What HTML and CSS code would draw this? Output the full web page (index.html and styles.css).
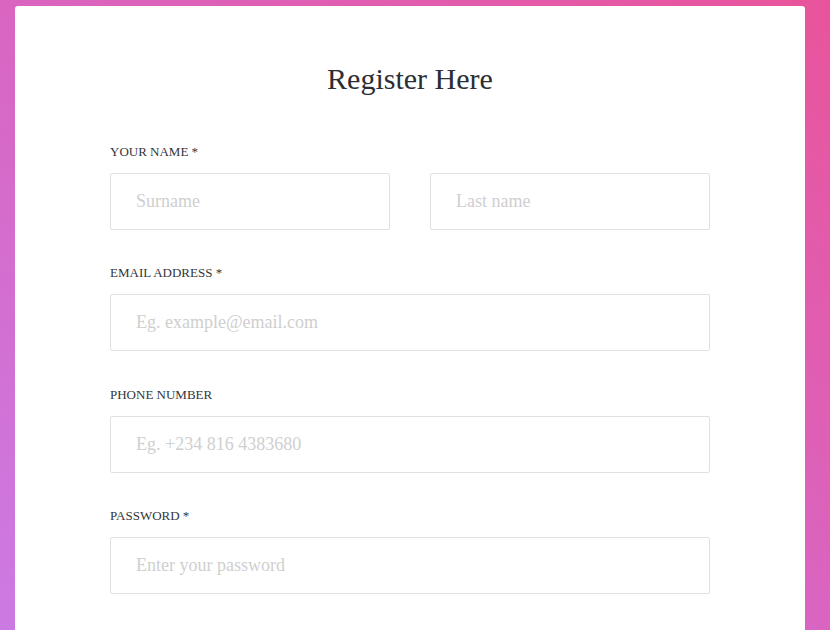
FILE: index.html
```html
<!DOCTYPE html>
<html lang="en">
<head>
<meta charset="utf-8">
<title>Register Here</title>
<link rel="stylesheet" href="styles.css">
</head>
<body>
<div class="page">
  <div class="card">
    <h1 class="title">Register Here</h1>
    <form class="form">
      <div class="group">
        <label class="label">YOUR NAME *</label>
        <div class="row">
          <input class="field" type="text" placeholder="Surname">
          <input class="field" type="text" placeholder="Last name">
        </div>
      </div>
      <div class="group">
        <label class="label">EMAIL ADDRESS *</label>
        <input class="field" type="email" placeholder="Eg. example@email.com">
      </div>
      <div class="group">
        <label class="label">PHONE NUMBER</label>
        <input class="field" type="tel" placeholder="Eg. +234 816 4383680">
      </div>
      <div class="group">
        <label class="label">PASSWORD *</label>
        <input class="field" type="password" placeholder="Enter your password">
      </div>
    </form>
  </div>
</div>
</body>
</html>
```
FILE: styles.css
```css
html, body {
  margin: 0;
  padding: 0;
  height: 100%;
  overflow: hidden;
}
body {
  background: linear-gradient(to top right, #cc7ae3 0%, #d965c1 50%, #e9549b 100%);
  font-family: "Liberation Serif", "Times New Roman", serif;
}
.page {
  padding: 6px 25px 0 15px;
}
.card {
  width: 790px;
  box-sizing: border-box;
  background: #fff;
  border-radius: 3px 3px 0 0;
  padding: 57px 95px 60px;
  min-height: 700px;
}
.title {
  margin: 0 0 49px;
  text-align: center;
  font-size: 30px;
  line-height: 32px;
  font-weight: normal;
  color: #2b2f33;
}
.form {
  display: flex;
  flex-direction: column;
  gap: 35.3px;
}
.group {
  display: flex;
  flex-direction: column;
}
.label {
  font-size: 13px;
  line-height: 15px;
  color: #33363a;
  margin-bottom: 14px;
}
.row {
  display: flex;
  gap: 40px;
}
.row .field {
  flex: 1;
  min-width: 0;
}
.field {
  box-sizing: border-box;
  height: 57px;
  width: 100%;
  border: 1px solid #e1e1e1;
  border-radius: 2px;
  padding: 0 25px;
  font-family: "Liberation Serif", "Times New Roman", serif;
  font-size: 18px;
  color: #333;
  background: #fff;
  outline: none;
}
.field::placeholder {
  color: #cfcfcf;
}
```
